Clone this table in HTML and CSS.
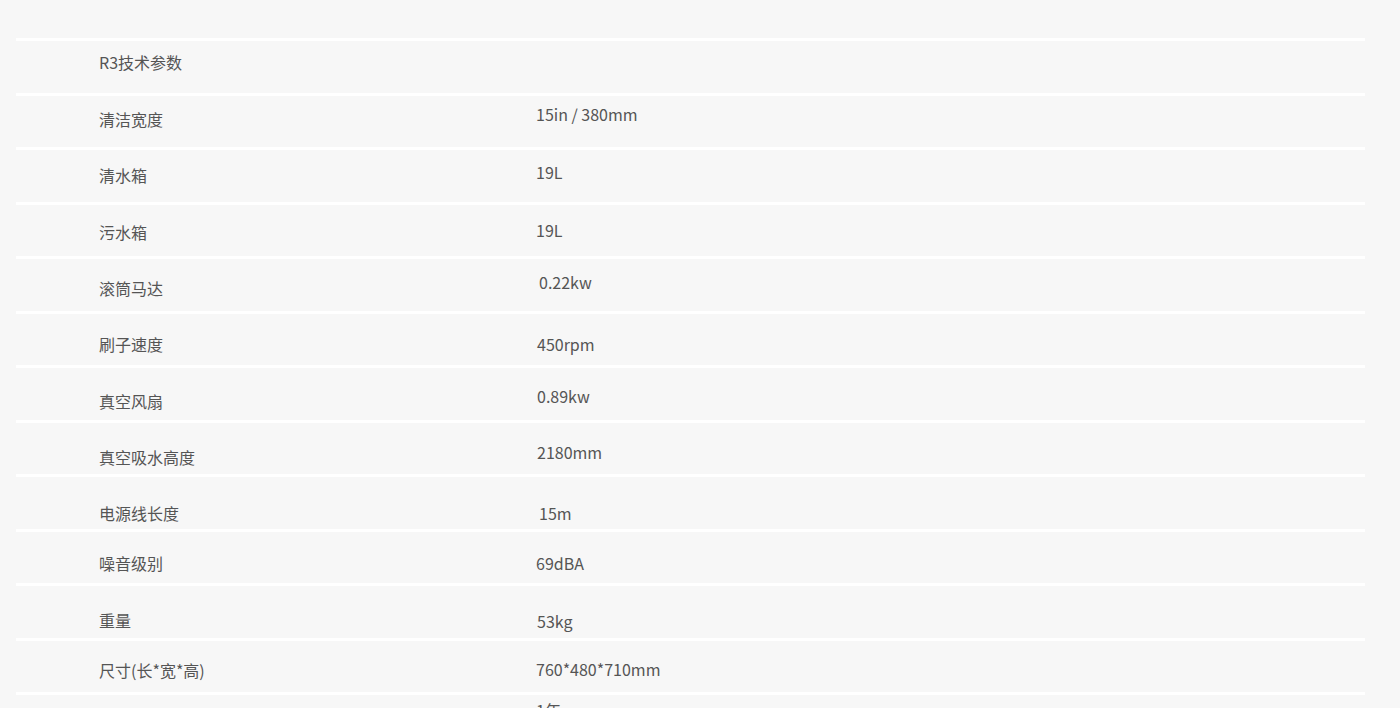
FILE: index.html
```html
<!DOCTYPE html>
<html lang="zh-CN">
<head>
<meta charset="utf-8">
<title>R3技术参数</title>
<link rel="stylesheet" href="styles.css">
</head>
<body>
<div class="specs">
  <div class="row"><div class="cell label p11">R3技术参数</div><div class="cell value"></div></div>
  <div class="row"><div class="cell label p13">清洁宽度</div><div class="cell value p8 sx0">15in / 380mm</div></div>
  <div class="row"><div class="cell label p15">清水箱</div><div class="cell value p12">19L</div></div>
  <div class="row"><div class="cell label p17">污水箱</div><div class="cell value p15">19L</div></div>
  <div class="row"><div class="cell label p19">滚筒马达</div><div class="cell value p13 sx3">0.22kw</div></div>
  <div class="row"><div class="cell label p20">刷子速度</div><div class="cell value p20 sx1">450rpm</div></div>
  <div class="row"><div class="cell label p23">真空风扇</div><div class="cell value p18 sx1">0.89kw</div></div>
  <div class="row"><div class="cell label p24">真空吸水高度</div><div class="cell value p19 sx1">2180mm</div></div>
  <div class="row"><div class="cell label p26">电源线长度</div><div class="cell value p26 sx3">15m</div></div>
  <div class="row"><div class="cell label p21">噪音级别</div><div class="cell value p21">69dBA</div></div>
  <div class="row"><div class="cell label p24">重量</div><div class="cell value p25 sx1">53kg</div></div>
  <div class="row"><div class="cell label p19">尺寸(长*宽*高)</div><div class="cell value p18 sx0">760*480*710mm</div></div>
  <div class="row"><div class="cell label p26">保修</div><div class="cell value p5">1年</div></div>
</div>
</body>
</html>
```
FILE: styles.css
```css
html, body {
  margin: 0;
  padding: 0;
  background: #f7f7f7;
}
body {
  font-family: "Noto Sans CJK SC", "Noto Sans", sans-serif;
  font-size: 16px;
  color: #555555;
  overflow: hidden;
}
.specs {
  margin: 0 0 0 16px;
  padding-top: 38px;
  width: 1349px;
  display: flex;
  flex-direction: column;
}
.row {
  display: flex;
  border-top: 3px solid #ffffff;
  height: 52px;
  flex: none;
}
.row:nth-child(even) {
  height: 51px;
}
.cell {
  line-height: 20px;
  box-sizing: border-box;
  white-space: nowrap;
}
.label {
  width: 520px;
  padding-left: 83px;
}
.value {
  flex: 1;
  padding-left: 0;
}
.sx0 { padding-left: 0; }
.sx1 { padding-left: 1px; }
.sx3 { padding-left: 3px; }
.p5 { padding-top: 5px; }
.p8 { padding-top: 8px; }
.p11 { padding-top: 11px; }
.p12 { padding-top: 12px; }
.p13 { padding-top: 13px; }
.p15 { padding-top: 15px; }
.p17 { padding-top: 17px; }
.p18 { padding-top: 18px; }
.p19 { padding-top: 19px; }
.p20 { padding-top: 20px; }
.p21 { padding-top: 21px; }
.p23 { padding-top: 23px; }
.p24 { padding-top: 24px; }
.p25 { padding-top: 25px; }
.p26 { padding-top: 26px; }
```
